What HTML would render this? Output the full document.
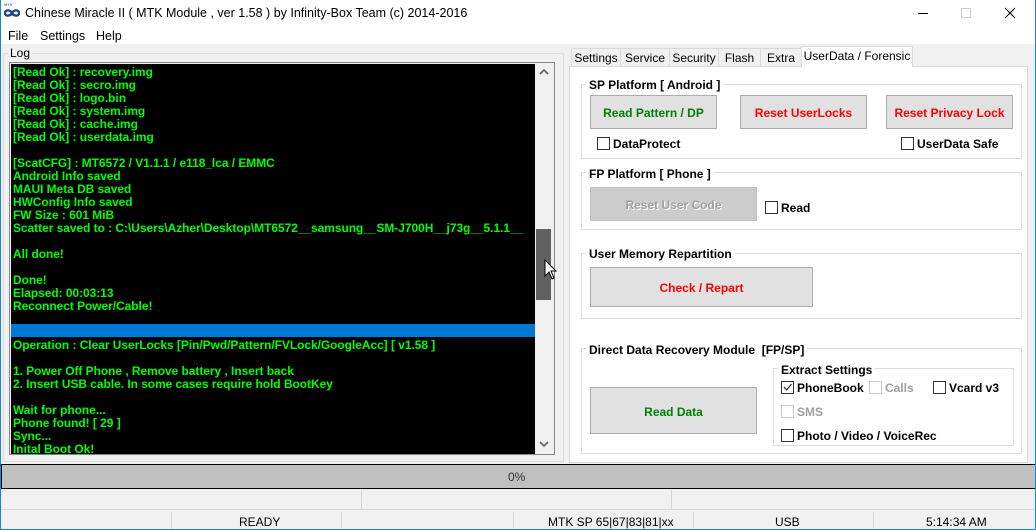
<!DOCTYPE html>
<html><head><meta charset="utf-8"><style>
*{margin:0;padding:0;box-sizing:border-box}
body{width:1036px;height:530px;overflow:hidden;background:#f0f0f0;font-family:"Liberation Sans",sans-serif;font-size:12px;color:#000;position:relative}
.a{position:absolute}
.win{left:0;top:0;width:1036px;height:530px;border:1px solid #1883d7}
.log div{height:13px;line-height:13px;white-space:nowrap}
.log{font-weight:bold;font-size:11.9px;color:#0f0}
.grp{border:1px solid #dcdcdc}
.gl{background:#fff;font-weight:bold;font-size:12px;padding:0 3px;white-space:nowrap;margin-top:1px}
.btn{background:#e1e1e1;border:1px solid #adadad;font-weight:bold;font-size:12px;display:flex;align-items:center;justify-content:center;padding-top:2px}
.cb{width:13px;height:13px;border:1px solid #333;background:#fff;margin-top:1px}
.cbd{border-color:#ccc}
.cl{font-weight:bold;font-size:12px;white-space:nowrap;margin-top:1px}
.tab{top:48px;height:19px;border:1px solid #d9d9d9;background:#f0f0f0;text-align:center;line-height:19px;font-size:12px}
.sb{top:0;width:1px;height:100%;background:#d5d5d5}
</style></head><body>
<div class="a" style="left:0;top:0;width:1036px;height:44px;background:#fff"></div>
<div class="a" style="left:4px;top:3px;font-size:4px;color:#5b7fb8;font-weight:bold;line-height:4px">MTK</div>
<svg class="a" style="left:3px;top:8px" width="18" height="10" viewBox="0 0 18 10"><path d="M9 5C7 1.5 2 1.5 2 5s5 3.5 7 0 7-3.5 7 0-5 3.5-7 0" fill="none" stroke="#1f3f8a" stroke-width="2.3"/></svg>
<div class="a" style="left:25px;top:6px;font-size:12.5px">Chinese Miracle II ( MTK Module , ver 1.58 ) by Infinity-Box Team (c) 2014-2016</div>
<div class="a" style="left:918px;top:13px;width:10px;height:1px;background:#000"></div>
<div class="a" style="left:961px;top:8px;width:10px;height:10px;border:1px solid #ccc"></div>
<svg class="a" style="left:1004px;top:7px" width="12" height="12"><path d="M1 1L11 11M11 1L1 11" stroke="#000" stroke-width="1"/></svg>
<div class="a" style="left:8px;top:29px;font-size:12.5px">File</div>
<div class="a" style="left:40px;top:29px;font-size:12.5px">Settings</div>
<div class="a" style="left:96px;top:29px;font-size:12.5px">Help</div>

<div class="a" style="left:3px;top:53px;width:561px;height:409px;border:1px solid #dcdcdc"></div>
<div class="a" style="left:8px;top:46px;background:#f0f0f0;padding:0 2px;font-size:12px">Log</div>
<div class="a" style="left:9px;top:62px;width:546px;height:393px;border:1px solid #828790;background:#f0f0f0"></div>
<div class="a" style="left:11px;top:64px;width:524px;height:390px;background:#000"></div>
<div class="a log" style="left:11px;top:66px;width:524px;height:388px;padding-left:2px;overflow:hidden">
<div>[Read Ok] : recovery.img</div><div>[Read Ok] : secro.img</div><div>[Read Ok] : logo.bin</div><div>[Read Ok] : system.img</div><div>[Read Ok] : cache.img</div><div>[Read Ok] : userdata.img</div><div></div>
<div>[ScatCFG] : MT6572 / V1.1.1 / e118_lca / EMMC</div><div>Android Info saved</div><div>MAUI Meta DB saved</div><div>HWConfig Info saved</div><div>FW Size : 601 MiB</div><div>Scatter saved to : C:\Users\Azher\Desktop\MT6572__samsung__SM-J700H__j73g__5.1.1__</div><div></div>
<div>All done!</div><div></div><div>Done!</div><div>Elapsed: 00:03:13</div><div>Reconnect Power/Cable!</div><div></div>
<div style="background:#0078d7;margin-left:-2px;position:relative;top:-2px"></div>
<div>Operation : Clear UserLocks [Pin/Pwd/Pattern/FVLock/GoogleAcc] [ v1.58 ]</div><div></div>
<div>1. Power Off Phone , Remove battery , Insert back</div><div>2. Insert USB cable. In some cases require hold BootKey</div><div></div>
<div>Wait for phone...</div><div>Phone found! [ 29 ]</div><div>Sync...</div><div>Inital Boot Ok!</div>
</div>
<svg class="a" style="left:539px;top:68px" width="10" height="8"><path d="M1 6L5 2L9 6" fill="none" stroke="#606060" stroke-width="1.6"/></svg>
<svg class="a" style="left:539px;top:440px" width="10" height="8"><path d="M1 2L5 6L9 2" fill="none" stroke="#606060" stroke-width="1.6"/></svg>
<div class="a" style="left:536px;top:229px;width:15px;height:71px;background:#606060"></div>
<svg class="a" style="left:544px;top:259px" width="14" height="22"><path d="M1 1V17L5 13L8 20L10 19L7 12H12Z" fill="#fff" stroke="#000" stroke-width="1"/></svg>

<div class="a" style="left:569px;top:66px;width:459px;height:397px;background:#fff;border:1px solid #d9d9d9"></div>
<div class="a tab" style="left:571px;width:50px">Settings</div>
<div class="a tab" style="left:620px;width:50px">Service</div>
<div class="a tab" style="left:669px;width:50px">Security</div>
<div class="a tab" style="left:718px;width:43px">Flash</div>
<div class="a tab" style="left:760px;width:42px">Extra</div>
<div class="a tab" style="left:801px;top:46px;width:112px;height:21px;background:#fff;border-bottom:none;line-height:19px">UserData / Forensic</div>

<div class="a grp" style="left:581px;top:84px;width:441px;height:75px"></div>
<div class="a gl" style="left:586px;top:77px">SP Platform [ Android ]</div>
<div class="a btn" style="left:590px;top:95px;width:127px;height:34px;color:#008000">Read Pattern / DP</div>
<div class="a btn" style="left:740px;top:95px;width:127px;height:34px;color:#f00">Reset UserLocks</div>
<div class="a btn" style="left:886px;top:95px;width:127px;height:34px;color:#f00">Reset Privacy Lock</div>
<div class="a cb" style="left:597px;top:136px"></div><div class="a cl" style="left:613px;top:136px">DataProtect</div>
<div class="a cb" style="left:901px;top:136px"></div><div class="a cl" style="left:917px;top:136px">UserData Safe</div>

<div class="a grp" style="left:581px;top:172px;width:441px;height:58px"></div>
<div class="a gl" style="left:586px;top:166px">FP Platform [ Phone ]</div>
<div class="a btn" style="left:590px;top:187px;width:167px;height:34px;background:#ccc;border-color:#bfbfbf;color:#a0a0a0;text-shadow:1px 1px 0 #fff">Reset User Code</div>
<div class="a cb" style="left:765px;top:200px"></div><div class="a cl" style="left:781px;top:200px">Read</div>

<div class="a grp" style="left:581px;top:253px;width:441px;height:66px"></div>
<div class="a gl" style="left:586px;top:246px">User Memory Repartition</div>
<div class="a btn" style="left:590px;top:267px;width:223px;height:40px;color:#f00">Check / Repart</div>

<div class="a grp" style="left:581px;top:348px;width:441px;height:106px"></div>
<div class="a gl" style="left:586px;top:342px">Direct Data Recovery Module&nbsp; [FP/SP]</div>
<div class="a btn" style="left:590px;top:387px;width:167px;height:47px;color:#008000">Read Data</div>
<div class="a grp" style="left:773px;top:368px;width:241px;height:78px"></div>
<div class="a gl" style="left:778px;top:362px">Extract Settings</div>
<div class="a cb" style="left:781px;top:380px"></div>
<svg class="a" style="left:782px;top:382px" width="11" height="11"><path d="M2 5L4.5 8L9.5 2" fill="none" stroke="#333" stroke-width="1.2"/></svg>
<div class="a cl" style="left:797px;top:380px">PhoneBook</div>
<div class="a cb cbd" style="left:869px;top:380px"></div><div class="a cl" style="left:885px;top:380px;color:#a0a0a0">Calls</div>
<div class="a cb" style="left:933px;top:380px"></div><div class="a cl" style="left:949px;top:380px">Vcard v3</div>
<div class="a cb cbd" style="left:781px;top:404px"></div><div class="a cl" style="left:797px;top:404px;color:#a0a0a0">SMS</div>
<div class="a cb" style="left:781px;top:428px"></div><div class="a cl" style="left:797px;top:428px">Photo / Video / VoiceRec</div>

<div class="a" style="left:1px;top:464px;width:1035px;height:25px;background:#c0c0c0;border:1px solid #000"></div>
<div class="a" style="left:508px;top:470px;font-size:12px;color:#333">0%</div>
<div class="a" style="left:1px;top:490px;width:1035px;height:40px">
<div class="a sb" style="left:360px;height:20px"></div><div class="a sb" style="left:670px;height:20px"></div>
<div class="a" style="left:0;top:19px;width:1035px;height:1px;background:#d8d8d8"></div>
<div class="a sb" style="left:170px;top:22px;height:18px"></div><div class="a sb" style="left:340px;top:22px;height:18px"></div><div class="a sb" style="left:512px;top:22px;height:18px"></div><div class="a sb" style="left:692px;top:22px;height:18px"></div><div class="a sb" style="left:872px;top:22px;height:18px"></div>
<div class="a" style="left:238px;top:25px">READY</div>
<div class="a" style="left:547px;top:25px">MTK SP 65|67|83|81|xx</div>
<div class="a" style="left:774px;top:25px">USB</div>
<div class="a" style="left:925px;top:25px">5:14:34 AM</div>
</div>
<div class="a win" style="pointer-events:none;border-top:none"></div>
</body></html>
